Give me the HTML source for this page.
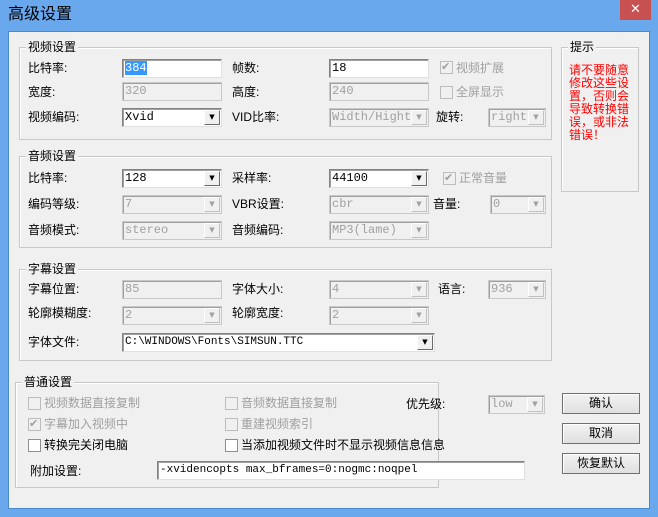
<!DOCTYPE html>
<html><head><meta charset="utf-8"><style>
*{margin:0;padding:0;box-sizing:border-box}
body{width:658px;height:517px;background:#6aa8ee;position:relative;overflow:hidden;font-family:"Liberation Sans","Noto Sans CJK SC",sans-serif;font-size:12px;color:#000}
.a{position:absolute;white-space:nowrap;line-height:14px}
#client{position:absolute;left:8px;top:31px;width:642px;height:478px;background:#f0f0f0;border:1px solid #4a88cc}
.g{position:absolute;border:1px solid #c8c8c8;box-shadow:inset 1px 1px 0 #fff}
.gt{position:absolute;background:#f0f0f0;padding:0 2px;line-height:14px;top:-8px;left:6px}
.in{position:absolute;height:19px;border:1px solid #828282;border-right-color:#e0e0e0;border-bottom-color:#e0e0e0;box-shadow:inset 1px 1px 0 #a0a0a0;background:#fff;font-family:"Liberation Mono",monospace;font-size:12px;line-height:17px;padding-left:2px}
.in.d{background:#f0f0f0;color:#a0a0a0;border-color:#c8c8c8}
.in .b{position:absolute;right:1px;top:1px;width:16px;height:15px;border:1px solid #fff;border-right-color:#696969;border-bottom-color:#696969;background:#f0f0f0;font-size:7px;line-height:13px;text-align:center;color:#000;font-family:"DejaVu Sans",sans-serif}
.in.d .b{color:#a0a0a0;border-right-color:#c0c0c0;border-bottom-color:#c0c0c0}
.cb{position:absolute;width:13px;height:13px;border:1px solid #8e8f8f;background:#fff}
.cb.d{background:#f0f0f0;border-color:#bcbcbc}
.cb span{position:absolute;left:0;top:-2px;font-size:11px;color:#a0a0a0;font-family:"DejaVu Sans",sans-serif}
.gr{color:#a0a0a0}
.btn{position:absolute;width:78px;height:21px;border:1px solid #707070;background:linear-gradient(#f2f2f2,#e0e0e0);text-align:center;line-height:19px;box-shadow:inset 1px 1px 0 #fff}
</style></head><body>
<div class="a" style="left:8px;top:5px;font-size:16px;line-height:19px">高级设置</div>
<div style="position:absolute;left:620px;top:0;width:31px;height:20px;background:#c75050;color:#fff;text-align:center;font-size:13px;line-height:20px;font-family:'DejaVu Sans',sans-serif">✕</div>
<div id="client"></div>

<div class="g" style="left:19px;top:47px;width:533px;height:93px"><div class="gt">视频设置</div></div>
<div class="a" style="left:28px;top:61px">比特率:</div>
<div class="in" style="left:122px;top:59px;width:100px"><span style="background:#3399ff;color:#fff">384</span></div>
<div class="a" style="left:232px;top:61px">帧数:</div>
<div class="in" style="left:329px;top:59px;width:100px">18</div>
<div class="cb d" style="left:440px;top:61px"><span>✔</span></div><div class="a gr" style="left:456px;top:61px">视频扩展</div>
<div class="a" style="left:28px;top:85px">宽度:</div>
<div class="in d" style="left:122px;top:82px;width:100px">320</div>
<div class="a" style="left:232px;top:85px">高度:</div>
<div class="in d" style="left:329px;top:82px;width:100px">240</div>
<div class="cb d" style="left:440px;top:86px"></div><div class="a gr" style="left:456px;top:85px">全屏显示</div>
<div class="a" style="left:28px;top:110px">视频编码:</div>
<div class="in" style="left:122px;top:108px;width:100px">Xvid<div class="b">▼</div></div>
<div class="a" style="left:232px;top:110px">VID比率:</div>
<div class="in d" style="left:329px;top:108px;width:100px">Width/Hight<div class="b">▼</div></div>
<div class="a" style="left:436px;top:110px">旋转:</div>
<div class="in d" style="left:488px;top:108px;width:58px">right9<div class="b">▼</div></div>

<div class="g" style="left:561px;top:47px;width:78px;height:145px"><div class="gt">提示</div></div>
<div class="a" style="left:569px;top:64px;color:#f00;line-height:13px;font-size:12px">请不要随意<br>修改这些设<br>置，否则会<br>导致转换错<br>误，或非法<br>错误！</div>

<div class="g" style="left:19px;top:156px;width:533px;height:92px"><div class="gt">音频设置</div></div>
<div class="a" style="left:28px;top:171px">比特率:</div>
<div class="in" style="left:122px;top:169px;width:100px">128<div class="b">▼</div></div>
<div class="a" style="left:232px;top:171px">采样率:</div>
<div class="in" style="left:329px;top:169px;width:100px">44100<div class="b">▼</div></div>
<div class="cb d" style="left:443px;top:172px"><span>✔</span></div><div class="a gr" style="left:459px;top:171px">正常音量</div>
<div class="a" style="left:28px;top:197px">编码等级:</div>
<div class="in d" style="left:122px;top:195px;width:100px">7<div class="b">▼</div></div>
<div class="a" style="left:232px;top:197px">VBR设置:</div>
<div class="in d" style="left:329px;top:195px;width:100px">cbr<div class="b">▼</div></div>
<div class="a" style="left:433px;top:197px">音量:</div>
<div class="in d" style="left:490px;top:195px;width:56px">0<div class="b">▼</div></div>
<div class="a" style="left:28px;top:223px">音频模式:</div>
<div class="in d" style="left:122px;top:221px;width:100px">stereo<div class="b">▼</div></div>
<div class="a" style="left:232px;top:223px">音频编码:</div>
<div class="in d" style="left:329px;top:221px;width:100px">MP3(lame)<div class="b">▼</div></div>

<div class="g" style="left:19px;top:269px;width:533px;height:92px"><div class="gt">字幕设置</div></div>
<div class="a" style="left:28px;top:282px">字幕位置:</div>
<div class="in d" style="left:122px;top:280px;width:100px">85</div>
<div class="a" style="left:232px;top:282px">字体大小:</div>
<div class="in d" style="left:329px;top:280px;width:100px">4<div class="b">▼</div></div>
<div class="a" style="left:438px;top:282px">语言:</div>
<div class="in d" style="left:488px;top:280px;width:58px">936<div class="b">▼</div></div>
<div class="a" style="left:28px;top:306px">轮廓模糊度:</div>
<div class="in d" style="left:122px;top:306px;width:100px">2<div class="b">▼</div></div>
<div class="a" style="left:232px;top:306px">轮廓宽度:</div>
<div class="in d" style="left:329px;top:306px;width:100px">2<div class="b">▼</div></div>
<div class="a" style="left:28px;top:335px">字体文件:</div>
<div class="in" style="left:122px;top:333px;width:313px;font-size:11px">C:\WINDOWS\Fonts\SIMSUN.TTC<div class="b">▼</div></div>

<div class="g" style="left:15px;top:382px;width:424px;height:106px"><div class="gt">普通设置</div></div>
<div class="cb d" style="left:28px;top:397px"></div><div class="a gr" style="left:44px;top:396px">视频数据直接复制</div>
<div class="cb d" style="left:225px;top:397px"></div><div class="a gr" style="left:241px;top:396px">音频数据直接复制</div>
<div class="a" style="left:406px;top:397px">优先级:</div>
<div class="in d" style="left:488px;top:395px;width:57px">low<div class="b">▼</div></div>
<div class="cb d" style="left:28px;top:418px"><span>✔</span></div><div class="a gr" style="left:44px;top:417px">字幕加入视频中</div>
<div class="cb d" style="left:225px;top:418px"></div><div class="a gr" style="left:241px;top:417px">重建视频索引</div>
<div class="cb" style="left:28px;top:439px"></div><div class="a" style="left:44px;top:438px">转换完关闭电脑</div>
<div class="cb" style="left:225px;top:439px"></div><div class="a" style="left:241px;top:438px">当添加视频文件时不显示视频信息信息</div>
<div class="a" style="left:30px;top:464px">附加设置:</div>
<div class="in" style="left:157px;top:461px;width:368px;font-size:11px">-xvidencopts max_bframes=0:nogmc:noqpel</div>

<div class="btn" style="left:562px;top:393px">确认</div>
<div class="btn" style="left:562px;top:423px">取消</div>
<div class="btn" style="left:562px;top:453px">恢复默认</div>
</body></html>
